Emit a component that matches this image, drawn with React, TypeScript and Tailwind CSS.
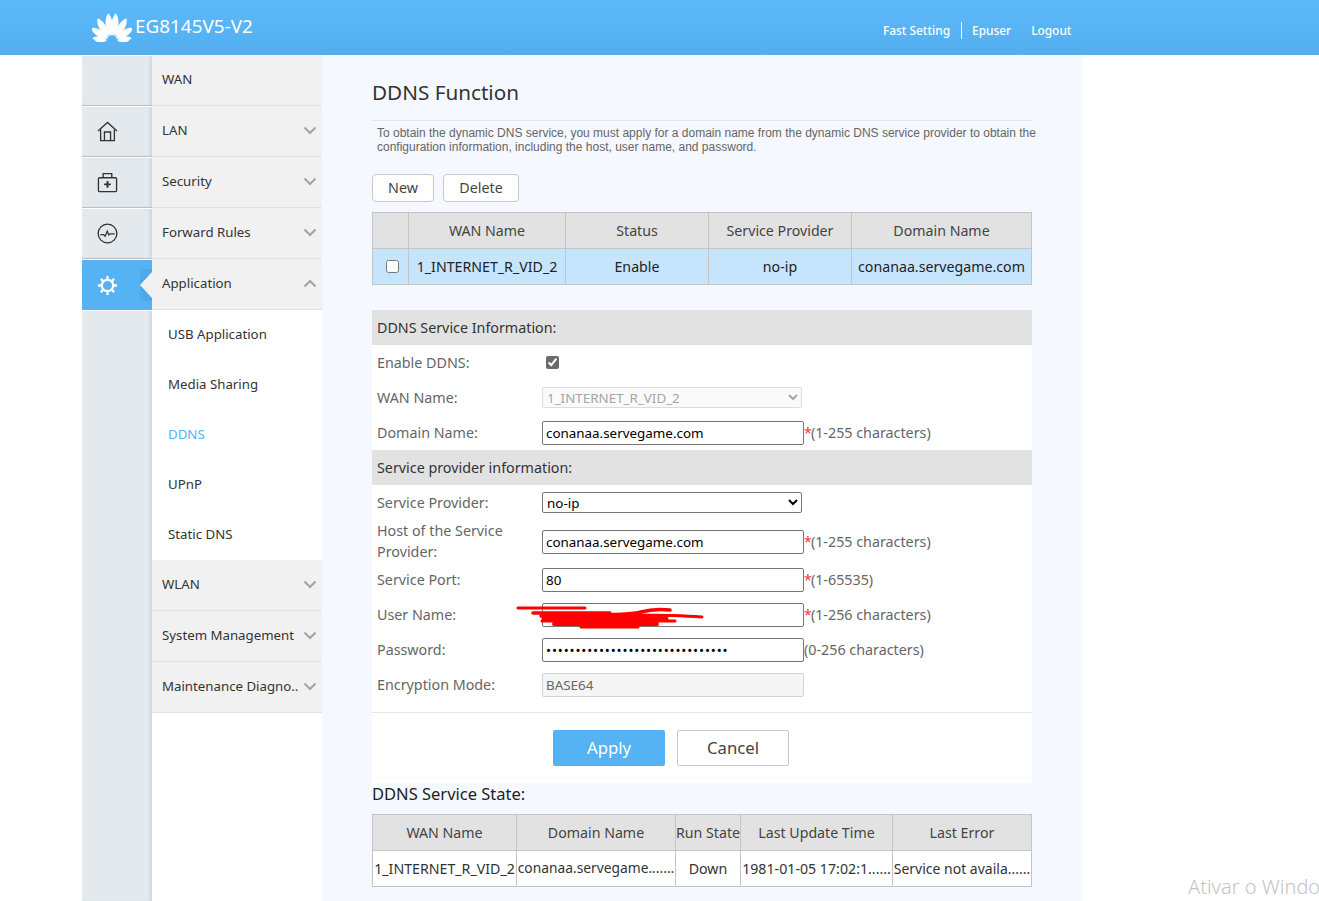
import React from "react";

const Chevron = ({ up = false }: { up?: boolean }) => (
  <svg width="14" height="9" viewBox="0 0 14 9" fill="none" className="shrink-0">
    <path d={up ? "M1.5 7.5 7 2l5.500 5.500" : "M1.500 1.500 7 7l5.500-5.500"} stroke="#a3a3a3" strokeWidth="2" />
  </svg>
);

const petals = [
  { a: 11, d: "M0-4C-4.300-10-5-22-1.500-27 4.800-22 4.300-10 0-4Z" },
  { a: 37, d: "M0-4C-4.300-10-5-21-1.500-26 4.800-21 4.300-10 0-4Z" },
  { a: 63, d: "M0-4C-4.200-9-4.800-19-1.500-24 4.500-19 4.200-9 0-4Z" },
  { a: 90, d: "M0-5C-3.800-9-4.500-15-2-19.500 4-15 3.800-9 0-5Z" },
];

const Logo = () => (
  <svg width="40" height="30" viewBox="0 0 40 30" fill="#fff" className="shrink-0">
    <g transform="translate(20 28)">
      {petals.map((p) => (
        <g key={p.a}>
          <path d={p.d} transform={`rotate(${p.a})`} />
          <path d={p.d} transform={`scale(-1 1) rotate(${p.a})`} />
        </g>
      ))}
    </g>
  </svg>
);

const HomeIcon = () => (
  <svg width="21" height="21" viewBox="0 0 22 22" fill="none" stroke="#333" strokeWidth="1.400">
    <path d="M1 10.500 11 1.500l10 9" />
    <path d="M3.800 9v11.500h14.400V9" />
    <path d="M7.800 20.500v-9h6.400v9" />
  </svg>
);

const KitIcon = () => (
  <svg width="21" height="21" viewBox="0 0 22 22" fill="none" stroke="#333" strokeWidth="1.400">
    <rect x="1.500" y="6" width="19" height="14.500" rx="1" />
    <path d="M6.500 6V1.700h9V6" />
    <path d="M11 9.500v7M7.500 13h7" strokeWidth="2" />
  </svg>
);

const PulseIcon = () => (
  <svg width="21" height="21" viewBox="0 0 22 22" fill="none" stroke="#333" strokeWidth="1.400">
    <circle cx="11" cy="11" r="9.800" />
    <path d="M3.500 12.200h3.500l1.500 1.800 2.300-5.500 1.500 4 1.200-1h5" strokeWidth="1.300" />
  </svg>
);

const SunIcon = () => (
  <svg width="21" height="21" viewBox="0 0 22 22" fill="none" stroke="#fff" strokeWidth="2.400">
    <circle cx="11" cy="11" r="6" />
    <path d="M11 1v3.500M11 17.500V21M1 11h3.500M17.500 11H21M4 4l2.400 2.400M15.600 15.600 18 18M4 18l2.400-2.400M15.600 6.400 18 4" />
  </svg>
);

const Rail = ({ children }: { children?: React.ReactNode }) => (
  <div className="h-[51px] flex items-center justify-center pr-[20px] bg-[#e3e9ed] border-t border-t-white border-b border-b-[#bcc0c3] shadow-[inset_-3px_0_3px_-1px_#d2d6da]">
    {children}
  </div>
);

const MenuRow = ({ label, chevron }: { label: string; chevron?: "up" | "down" }) => (
  <div className="h-[51px] flex items-center justify-between pl-[10px] pr-[5px] pb-[1px] bg-[#f1f1f1] border-b border-[#e3e3e3] text-[13.250px] text-[#333]">
    <span className="whitespace-nowrap">{label}</span>
    {chevron && <Chevron up={chevron === "up"} />}
  </div>
);

const SubRow = ({ label, active }: { label: string; active?: boolean }) => (
  <div className={"h-[50px] flex items-center pl-[16px] pb-[1px] bg-white text-[13.250px] " + (active ? "text-[#55b2f3]" : "text-[#333]")}>
    {label}
  </div>
);

const Section = ({ title }: { title: string }) => (
  <div className="h-[35px] flex items-center pl-[5px] bg-[#e2e2e2] text-[14.300px] text-[#333]">{title}</div>
);

const Row = ({ label, children, tall }: { label: string; children: React.ReactNode; tall?: boolean }) => (
  <div className={(tall ? "h-[43px]" : "h-[35px]") + " flex items-center text-[14.300px] text-[#666]"}>
    <div className={"w-[170px] shrink-0 pl-[5px] leading-[21px]" + (tall ? " pb-[2px]" : "")}>{label}</div>
    {children}
  </div>
);

const inputCls =
  "w-[262px] h-[24px] px-[3px] border border-[#767676] rounded-[2px] bg-white text-[13.400px] text-black outline-none shrink-0";

const Hint = ({ star = true, text }: { star?: boolean; text: string }) => (
  <span className="whitespace-nowrap">
    {star && <span className="text-[#ff3030] -mr-[1px]">*</span>}
    {text}
  </span>
);

const th = "border border-[#c4c4c4] font-normal text-[14.200px] text-[#444] text-center p-0 h-[36px] bg-[#e2e2e2] whitespace-nowrap overflow-hidden";

export default function App() {
  return (
    <div className="relative h-[901px] overflow-hidden bg-white font-['Noto_Sans','Open_Sans',sans-serif]">
      <header className="h-[55px] bg-gradient-to-b from-[#5cb9fa] to-[#52aeef] flex items-center text-white">
        <div className="w-[82px] shrink-0" />
        <div className="w-[801px] shrink-0 flex items-center pl-[10px] pb-[2px] gap-[3px]">
          <Logo />
          <span className="text-[18.900px] leading-none">EG8145V5-V2</span>
        </div>
        <div className="flex items-center text-[11.900px] font-medium pt-[7px]">
          <span>Fast Setting</span>
          <span className="w-px h-[17px] bg-white ml-[11px] mr-[10px]" />
          <span>Epuser</span>
          <span className="ml-[20px]">Logout</span>
        </div>
      </header>

      <div className="flex h-[846px]">
        <div className="w-[82px] shrink-0" />
        <div className="w-[70px] shrink-0 flex flex-col bg-[#e3e9ed] shadow-[inset_-3px_0_3px_-1px_#d2d6da]">
          <Rail />
          <Rail><HomeIcon /></Rail>
          <Rail><KitIcon /></Rail>
          <Rail><PulseIcon /></Rail>
          <div className="relative h-[51px] flex items-center justify-center pr-[20px] bg-[#55b2f3] border-t border-white">
            <SunIcon />
            <div className="absolute right-0 top-[9px] w-[12px] h-[32px] bg-[#4fa8e8] flex items-center justify-end">
              <div className="w-0 h-0 border-y-[13px] border-y-transparent border-r-[12px] border-r-[#f1f1f1]" />
            </div>
          </div>
          <div className="h-px bg-white" />
        </div>
        <nav className="w-[170px] shrink-0 bg-white">
          <MenuRow label="WAN" />
          <MenuRow label="LAN" chevron="down" />
          <MenuRow label="Security" chevron="down" />
          <MenuRow label="Forward Rules" chevron="down" />
          <MenuRow label="Application" chevron="up" />
          <SubRow label="USB Application" />
          <SubRow label="Media Sharing" />
          <SubRow label="DDNS" active />
          <SubRow label="UPnP" />
          <SubRow label="Static DNS" />
          <MenuRow label="WLAN" chevron="down" />
          <MenuRow label="System Management" chevron="down" />
          <MenuRow label="Maintenance Diagno.." chevron="down" />
        </nav>

        <main className="w-[760px] shrink-0 bg-[#f5f8fe] pl-[50px] pr-[50px]">
          <h1 className="h-[66px] border-b border-[#e6e6e6] pt-[22px] text-[20.700px] leading-[30px] font-normal text-[#333]">DDNS Function</h1>
          <p className="mt-[5px] pl-[5px] w-[680px] font-['Liberation_Sans',sans-serif] text-[12px] leading-[14px] text-[#666]">
            To obtain the dynamic DNS service, you must apply for a domain name from the dynamic DNS service provider to obtain the configuration information, including the host, user name, and password.
          </p>

          <div className="mt-[20px] flex gap-[9px] text-[14.300px] text-[#444]">
            <button className="w-[62px] h-[28px] bg-white border border-[#c9c9c9] rounded-[4px]">New</button>
            <button className="w-[76px] h-[28px] bg-white border border-[#c9c9c9] rounded-[4px]">Delete</button>
          </div>

          <table className="mt-[10px] w-[659px] table-fixed border-collapse">
            <colgroup>
              <col className="w-[36px]" />
              <col className="w-[157px]" />
              <col className="w-[143px]" />
              <col className="w-[143px]" />
              <col className="w-[180px]" />
            </colgroup>
            <thead>
              <tr>
                <th className={th}></th>
                <th className={th}>WAN Name</th>
                <th className={th}>Status</th>
                <th className={th}>Service Provider</th>
                <th className={th}>Domain Name</th>
              </tr>
            </thead>
            <tbody>
              <tr className="bg-[#c6e5fc] text-[14.200px] text-[#222] text-center">
                <td className="border border-[#c4c4c4] h-[36px] p-0"><input type="checkbox" className="block ml-[13px]" /></td>
                <td className="border border-[#c4c4c4] p-0 whitespace-nowrap">1_INTERNET_R_VID_2</td>
                <td className="border border-[#c4c4c4] p-0">Enable</td>
                <td className="border border-[#c4c4c4] p-0">no-ip</td>
                <td className="border border-[#c4c4c4] p-0 whitespace-nowrap">conanaa.servegame.com</td>
              </tr>
            </tbody>
          </table>

          <form className="relative mt-[25px] w-[660px] h-[473px] bg-white">
            <Section title="DDNS Service Information:" />
            <Row label="Enable DDNS:">
              <input type="checkbox" defaultChecked className="ml-[4px] accent-[#6b6b6b]" />
            </Row>
            <Row label="WAN Name:">
              <select disabled className="w-[260px] h-[21px] border border-[#dcdcdc] rounded-[2px] bg-[#fafafa] text-[13.400px] text-[#a5a5a5]">
                <option>1_INTERNET_R_VID_2</option>
              </select>
            </Row>
            <Row label="Domain Name:">
              <input className={inputCls} readOnly value="conanaa.servegame.com" />
              <Hint text="(1-255 characters)" />
            </Row>
            <Section title="Service provider information:" />
            <Row label="Service Provider:">
              <select className="w-[260px] h-[21px] border border-[#767676] rounded-[2px] bg-white text-[13.400px] text-black">
                <option>no-ip</option>
              </select>
            </Row>
            <Row label="Host of the Service Provider:" tall>
              <input className={inputCls} readOnly value="conanaa.servegame.com" />
              <Hint text="(1-255 characters)" />
            </Row>
            <div className="-mt-[1px]">
              <Row label="Service Port:">
                <input className={inputCls} readOnly value="80" />
                <Hint text="(1-65535)" />
              </Row>
            </div>
            <Row label="User Name:">
              <input className={inputCls} readOnly value="" />
              <Hint text="(1-256 characters)" />
            </Row>
            <Row label="Password:">
              <input type="password" className={inputCls + " tracking-[0.850px]"} readOnly value="passwordpasswordpasswordpasswor" />
              <Hint star={false} text="(0-256 characters)" />
            </Row>
            <Row label="Encryption Mode:">
              <input className="w-[262px] h-[24px] px-[3px] border border-[#d4d4d4] rounded-[2px] bg-[#f5f5f5] text-[13.400px] text-[#666] shrink-0" readOnly value="BASE64" />
            </Row>
            <div className="mt-[10px] border-t border-[#e4e4e4] pt-[17px] pl-[181px] flex gap-[12px]">
              <button type="button" className="w-[112px] h-[36px] rounded-[2px] bg-[#55b2f3] text-white text-[16.700px]">Apply</button>
              <button type="button" className="w-[112px] h-[36px] rounded-[2px] bg-white border border-[#c9c9c9] text-[#444] text-[16.700px]">Cancel</button>
            </div>
            <svg className="absolute left-[144px] top-[295px]" width="190" height="26" viewBox="0 0 190 26" fill="none" stroke="#ff0000" strokeLinecap="round">
              <path d="M2 3H69" strokeWidth="3" />
              <path d="M17 8H94" strokeWidth="3.500" />
              <path d="M25 11 C60 9 110 12 125 7 C135 4 145 4 154 5" strokeWidth="3.500" />
              <path d="M40 11 C80 10 150 9 186 12" strokeWidth="3" />
              <path d="M28 14 C60 13 120 13 150 14" strokeWidth="5" />
              <path d="M26 16H159" strokeWidth="3" />
              <path d="M38 19H141" strokeWidth="4" />
              <path d="M65 22H122" strokeWidth="3" />
            </svg>
          </form>

          <h2 className="h-[31px] text-[16.500px] leading-[22px] font-normal text-[#222]">DDNS Service State:</h2>
          <table className="w-[659px] table-fixed border-collapse">
            <colgroup>
              <col className="w-[144px]" />
              <col className="w-[159px]" />
              <col className="w-[65px]" />
              <col className="w-[152px]" />
              <col className="w-[139px]" />
            </colgroup>
            <thead>
              <tr>
                <th className={th}>WAN Name</th>
                <th className={th}>Domain Name</th>
                <th className={th}>Run State</th>
                <th className={th}>Last Update Time</th>
                <th className={th}>Last Error</th>
              </tr>
            </thead>
            <tbody>
              <tr className="bg-white text-[14.200px] text-[#333] text-center">
                <td className="border border-[#c4c4c4] h-[36px] p-0 whitespace-nowrap overflow-hidden">1_INTERNET_R_VID_2</td>
                <td className="border border-[#c4c4c4] p-0 whitespace-nowrap overflow-hidden text-[13.800px]">conanaa.servegame.......</td>
                <td className="border border-[#c4c4c4] p-0">Down</td>
                <td className="border border-[#c4c4c4] p-0 whitespace-nowrap overflow-hidden">1981-01-05 17:02:1......</td>
                <td className="border border-[#c4c4c4] p-0 whitespace-nowrap overflow-hidden text-[14px]">Service not availa......</td>
              </tr>
            </tbody>
          </table>
        </main>
      </div>

      <div className="absolute left-[1188px] top-[874px] whitespace-nowrap text-[20px] font-light leading-[26px] text-[#c4c4c4]">Ativar o Windows</div>
    </div>
  );
}
